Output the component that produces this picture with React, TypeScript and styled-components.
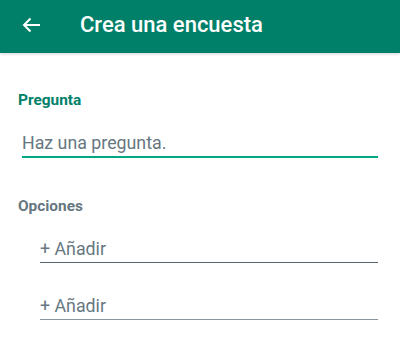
import React from "react";
import styled, { createGlobalStyle } from "styled-components";

const Global = createGlobalStyle`
  html, body { margin: 0; padding: 0; background: #ffffff; }
  body { font-family: Roboto, "Noto Sans", sans-serif; }
`;

const Page = styled.div`
  width: 400px;
  height: 349px;
  background: #ffffff;
  overflow: hidden;
`;

const Header = styled.header`
  height: 53px;
  box-sizing: border-box;
  padding-bottom: 4px;
  background: #008069;
  display: flex;
  align-items: center;
  box-shadow: 0 1px 3px rgba(0, 0, 0, 0.18);
  position: relative;
`;

const BackButton = styled.button`
  width: 80px;
  height: 40px;
  border: none;
  background: transparent;
  display: flex;
  align-items: center;
  padding: 0 0 0 22px;
  color: #ffffff;
  cursor: pointer;
`;

const Title = styled.h1`
  margin: 0;
  font-family: Roboto, sans-serif;
  font-weight: 500;
  font-size: 22px;
  line-height: 26px;
  color: #ffffff;
`;

const Body = styled.main`
  padding: 37px 22px 0 18px;
  display: flex;
  flex-direction: column;
`;

const SectionLabel = styled.div<{ $tone: "green" | "gray" }>`
  font-family: Roboto, sans-serif;
  font-weight: 700;
  font-size: 15.4px;
  line-height: 20px;
  color: ${(p) => (p.$tone === "green" ? "#008069" : "#667781")};
`;

const QuestionField = styled.div`
  margin: 22px 0 0 4px;
  padding-bottom: 2px;
  border-bottom: 2px solid #00a884;
  font-size: 17.8px;
  line-height: 22px;
  color: #667781;
`;

const OptionsBlock = styled.div`
  margin-top: 38px;
`;

const OptionList = styled.div`
  display: flex;
  flex-direction: column;
  gap: 32px;
  margin: 22px 0 0 22px;
`;

const OptionField = styled.div<{ $active: boolean }>`
  font-size: 17.8px;
  line-height: 22px;
  padding-bottom: 2px;
  color: #667781;
  border-bottom: 1px solid ${(p) => (p.$active ? "#54656f" : "#8696a0")};
`;

export default function App() {
  return (
    <Page>
      <Global />
      <Header>
        <BackButton aria-label="Atrás">
          <svg width="18" height="16" viewBox="0 0 18 16" fill="none">
            <path
              d="M18 8H2M8.5 1.5L2 8l6.5 6.5"
              stroke="#ffffff"
              strokeWidth="2"
              strokeLinecap="butt"
            />
          </svg>
        </BackButton>
        <Title>Crea una encuesta</Title>
      </Header>
      <Body>
        <SectionLabel $tone="green">Pregunta</SectionLabel>
        <QuestionField>Haz una pregunta.</QuestionField>
        <OptionsBlock>
          <SectionLabel $tone="gray">Opciones</SectionLabel>
          <OptionList>
            <OptionField $active>+ Añadir</OptionField>
            <OptionField $active={false}>+ Añadir</OptionField>
          </OptionList>
        </OptionsBlock>
      </Body>
    </Page>
  );
}
